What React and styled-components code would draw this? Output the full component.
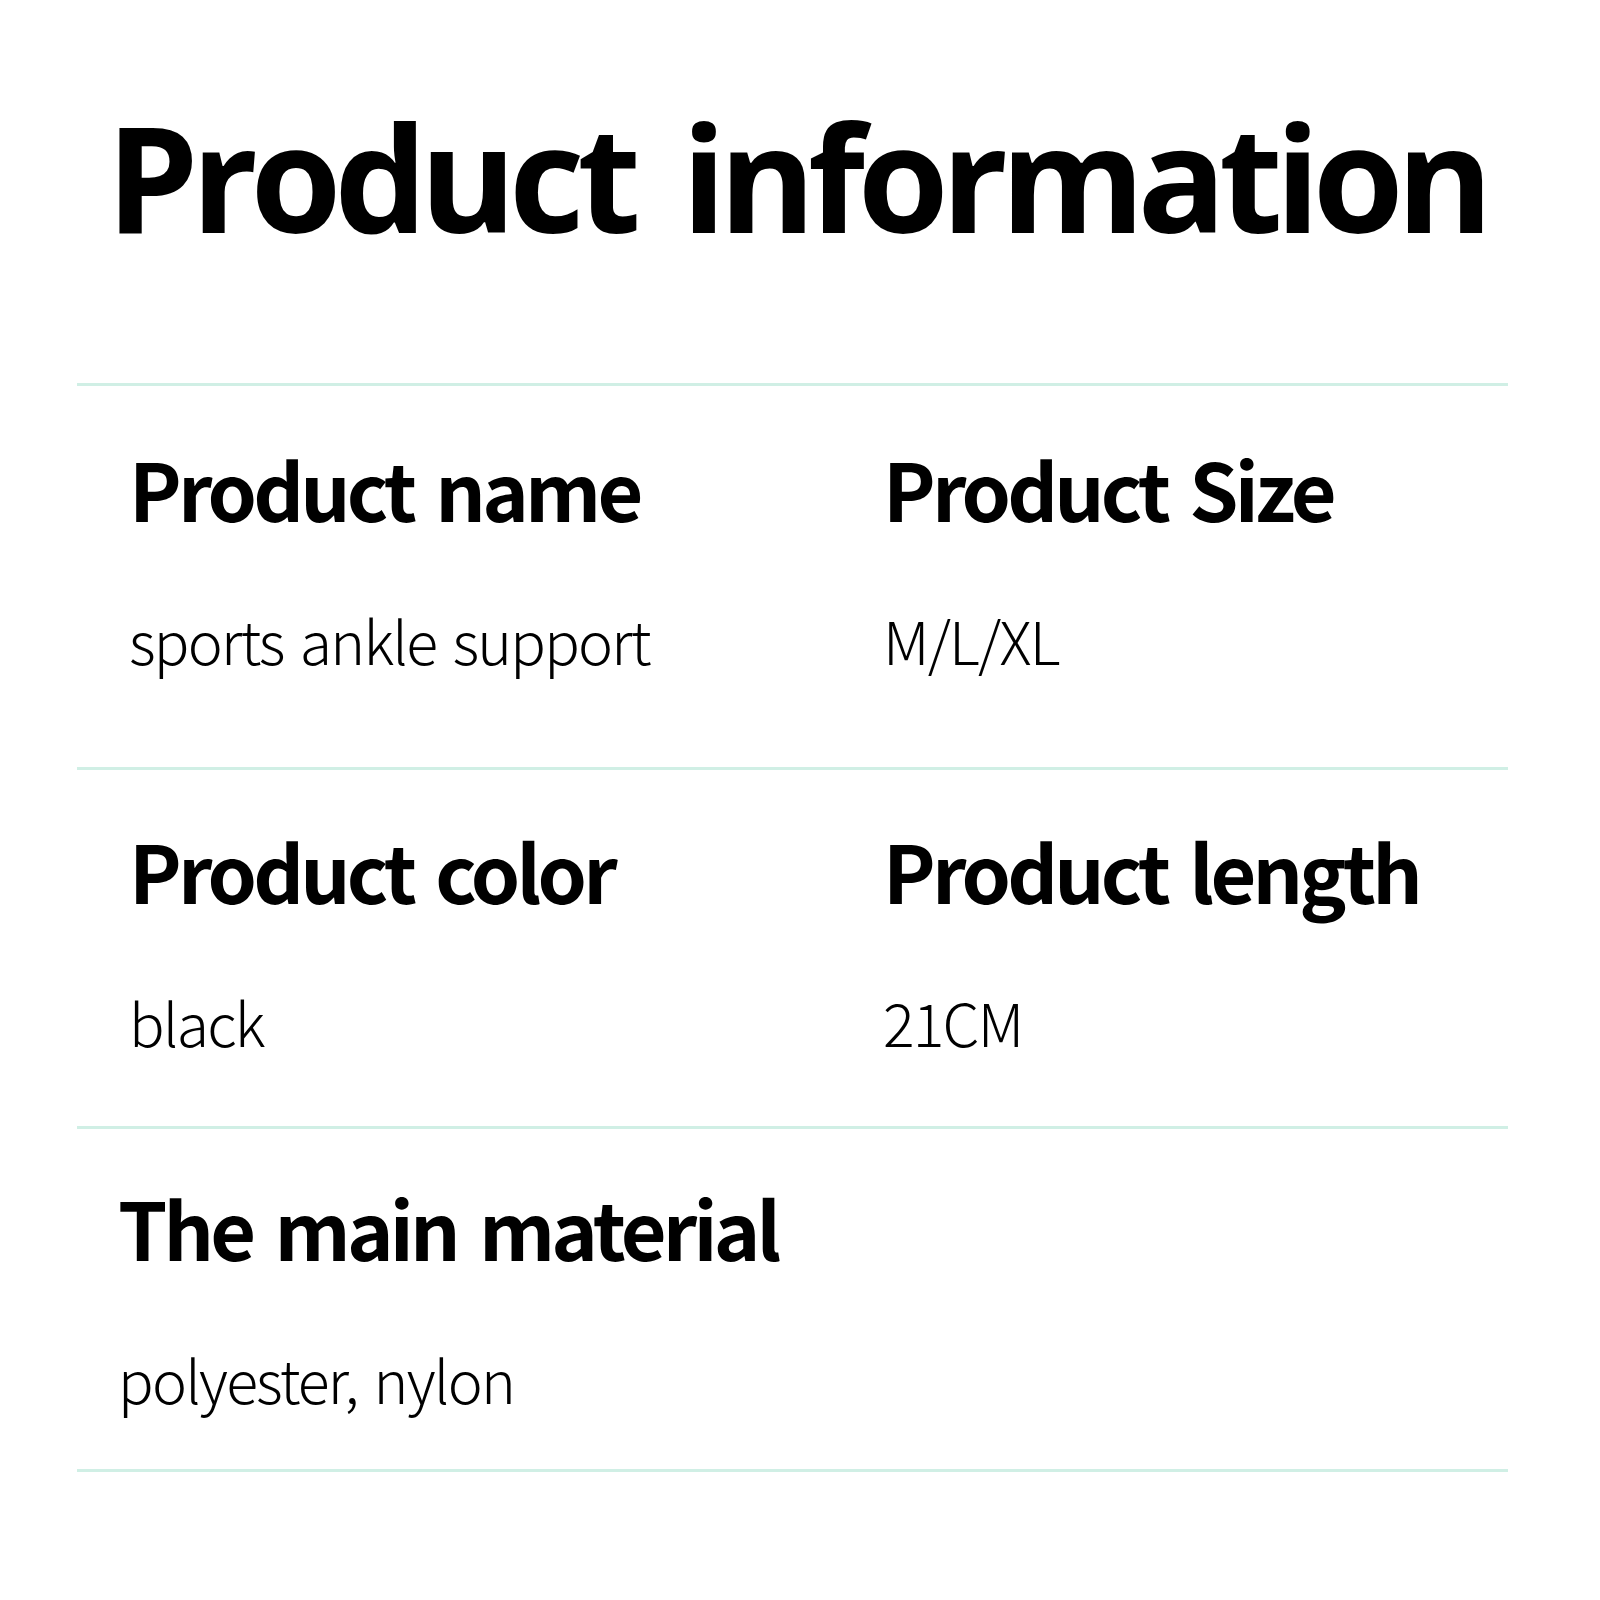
import React from "react";
import styled, { createGlobalStyle } from "styled-components";

const GlobalStyle = createGlobalStyle`
  html, body {
    margin: 0;
    padding: 0;
    background: #ffffff;
  }
`;

const rows = [
  {
    cells: [
      { label: "Product name", value: "sports ankle support" },
      { label: "Product Size", value: "M/L/XL" },
    ],
    top: 57,
    bottom: 92,
    indent: 52,
  },
  {
    cells: [
      { label: "Product color", value: "black" },
      { label: "Product length", value: "21CM" },
    ],
    top: 55,
    bottom: 69,
    indent: 52,
  },
  {
    cells: [{ label: "The main material", value: "polyester, nylon" }],
    top: 53,
    bottom: 55,
    indent: 41,
  },
];

const App = () => (
  <Page>
    <GlobalStyle />
    <Title>Product information</Title>
    <Table>
      {rows.map((row, i) => (
        <Row key={i} $top={row.top} $bottom={row.bottom} $indent={row.indent}>
          {row.cells.map((cell) => (
            <Cell key={cell.label}>
              <Label>{cell.label}</Label>
              <Value>{cell.value}</Value>
            </Cell>
          ))}
        </Row>
      ))}
    </Table>
  </Page>
);

const Page = styled.div`
  width: 1600px;
  height: 1600px;
  background: #ffffff;
  color: #000000;
  padding-top: 86px;
  box-sizing: border-box;
`;

const Title = styled.h1`
  margin: 0 8px 0 0;
  text-align: center;
  font-family: "Open Sans", "Noto Sans", sans-serif;
  font-weight: 700;
  font-size: 147px;
  line-height: 180px;
  letter-spacing: -7.4px;
  word-spacing: 17px;
`;

const Table = styled.div`
  margin: 117px 92px 0 77px;
  border-bottom: 3px solid #d0efe5;
`;

const Row = styled.div`
  display: grid;
  grid-template-columns: 754px 1fr;
  padding: ${(p) => p.$top}px 0 ${(p) => p.$bottom}px ${(p) => p.$indent}px;
  border-top: 3px solid #d0efe5;
`;

const Cell = styled.div`
  display: flex;
  flex-direction: column;
  gap: 72px;
`;

const Label = styled.div`
  font-family: "Noto Sans CJK SC", "Noto Sans", sans-serif;
  font-weight: 700;
  font-size: 79px;
  line-height: 90px;
  letter-spacing: -3.8px;
  word-spacing: 8px;
`;

const Value = styled.div`
  font-family: "Noto Sans CJK SC", "Noto Sans", sans-serif;
  font-weight: 300;
  font-size: 59px;
  line-height: 70px;
  letter-spacing: -1.8px;
  word-spacing: 5px;
`;

export default App;
